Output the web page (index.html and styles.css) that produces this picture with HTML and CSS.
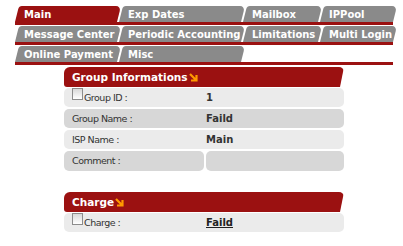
FILE: index.html
```html
<!DOCTYPE html>
<html lang="en">
<head>
  <meta charset="UTF-8">
  <title>Group Info</title>
  <link rel="stylesheet" href="styles.css">
</head>
<body>
  <div class="tabs">
    <div class="tab-row">
      <div class="tab active">Main</div>
      <div class="tab">Exp Dates</div>
      <div class="tab">Mailbox</div>
      <div class="tab">IPPool</div>
    </div>
    <div class="tab-row">
      <div class="tab">Message Center</div>
      <div class="tab">Periodic Accounting</div>
      <div class="tab">Limitations</div>
      <div class="tab">Multi Login</div>
    </div>
    <div class="tab-row">
      <div class="tab">Online Payment</div>
      <div class="tab">Misc</div>
    </div>
  </div>

  <div class="section">
    <div class="section-head">Group Informations<svg class="arrow" width="9" height="9" viewBox="0 0 9 9"><path d="M1 1 L7 7 M7.5 2 V7.5 H2" fill="none" stroke="#ff9900" stroke-width="2.2"/></svg></div>
    <div class="row light">
      <div class="label"><span class="check"></span>Group ID :</div>
      <div class="value">1</div>
    </div>
    <div class="row dark">
      <div class="label">Group Name :</div>
      <div class="value">Faild</div>
    </div>
    <div class="row light">
      <div class="label">ISP Name :</div>
      <div class="value">Main</div>
    </div>
    <div class="row split">
      <div class="label">Comment :</div>
      <div class="value"></div>
    </div>
  </div>

  <div class="section charge">
    <div class="section-head">Charge<svg class="arrow" width="9" height="9" viewBox="0 0 9 9"><path d="M1 1 L7 7 M7.5 2 V7.5 H2" fill="none" stroke="#ff9900" stroke-width="2.2"/></svg></div>
    <div class="row light">
      <div class="label"><span class="check"></span>Charge :</div>
      <div class="value"><a href="#" class="link">Faild</a></div>
    </div>
  </div>
</body>
</html>
```

FILE: styles.css
```css
body {
  margin: 0;
  padding: 0;
  font-family: "DejaVu Sans", Verdana, sans-serif;
  background-color: #fff;
  color: #333;
}

.tabs {
  padding: 6px 0 0 15px;
  width: 378px;
}

.tab-row {
  display: grid;
  grid-template-columns: 102px 122px 75px 73px;
  column-gap: 2px;
  border-bottom: 3px solid #9b1111;
  margin-bottom: 1px;
}

.tab {
  position: relative;
  z-index: 0;
  height: 16px;
  line-height: 17px;
  padding-left: 9px;
  font-size: 10px;
  font-weight: bold;
  color: #fff;
  white-space: nowrap;
}

.tab::before {
  content: '';
  position: absolute;
  top: 0;
  left: 0;
  right: 0;
  bottom: 0;
  z-index: -1;
  background-color: #8a8a8a;
  border-radius: 3px 5px 0 0;
  transform: skewX(-14deg);
  transform-origin: bottom left;
}

.tab.active::before {
  background-color: #9b1111;
}

.section {
  margin: 2px 0 0 64px;
  width: 280px;
}

.section.charge {
  margin-top: 21px;
}

.section-head {
  height: 20px;
  line-height: 20px;
  padding-left: 8px;
  background-color: #9b1111;
  color: #fff;
  font-size: 10.5px;
  font-weight: bold;
  border-radius: 6px 5px 0 3px;
  clip-path: polygon(0 0, 100% 0, calc(100% - 4px) 100%, 0 100%);
  margin-bottom: 1px;
}

.arrow {
  margin-left: 1px;
  vertical-align: -1px;
}

.row {
  display: grid;
  grid-template-columns: 140px 1fr;
  height: 19px;
  line-height: 19px;
  border-radius: 5px;
  margin-bottom: 2px;
}

.row.light {
  background-color: #ebebeb;
}

.row.dark {
  background-color: #d7d7d7;
}

.row.split {
  column-gap: 2px;
  height: 20px;
  line-height: 20px;
}

.row.split .label,
.row.split .value {
  background-color: #d7d7d7;
  border-radius: 5px;
}

.label {
  padding-left: 8px;
  font-size: 9.5px;
  letter-spacing: -0.5px;
  color: #333;
}

.value {
  padding-left: 2px;
  font-size: 10px;
  font-weight: bold;
  color: #333;
}

.row.split .value {
  padding-left: 0;
}

.check {
  display: inline-block;
  width: 9px;
  height: 10px;
  border: 1px solid #8c8c8c;
  background: linear-gradient(#d8d8d8, #fff);
  vertical-align: 1px;
  margin-right: 1px;
}

.link {
  color: #222;
  text-decoration: underline;
}
```
